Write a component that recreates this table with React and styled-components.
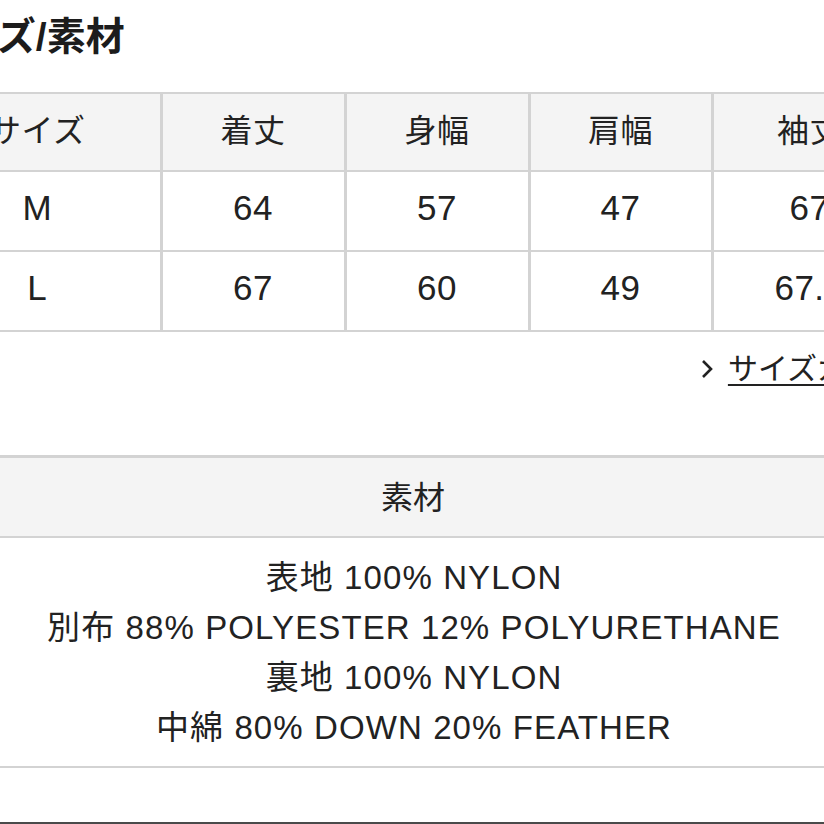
import React from 'react';
import styled, { createGlobalStyle } from 'styled-components';

const rule = '#d3d3d3';
const ink = '#222';
const headBg = '#f4f4f4';

const GlobalStyle = createGlobalStyle`
  html, body {
    margin: 0;
    padding: 0;
    background: #fff;
    overflow: hidden;
  }
  body {
    font-family: "Liberation Sans", "Noto Sans CJK JP", sans-serif;
    color: ${ink};
  }
`;

/* the view is a crop of a wider page, so the page sits left of the window */
const Page = styled.div`
  width: 992px;
  margin-left: -85px;
  display: flex;
  flex-direction: column;
`;

const Title = styled.h2`
  margin: 0;
  padding: 15px 0 0 5px;
  height: 92px;
  box-sizing: border-box;
  font-size: 39px;
  line-height: 44px;
  font-weight: 700;
  color: #1c1c1c;
`;

const SizeTable = styled.table`
  width: 100%;
  border-collapse: collapse;
  table-layout: fixed;
`;

const Cell = styled.td`
  height: ${({ $head }) => ($head ? '78px' : '80px')};
  padding: 0 0 ${({ $head }) => ($head ? '8px' : '6px')};
  box-sizing: border-box;
  text-align: center;
  vertical-align: middle;
  font-size: ${({ $head }) => ($head ? '32px' : '35px')};
  font-weight: 400;
  letter-spacing: 0.5px;
  border-top: 2px solid ${rule};
  border-bottom: 2px solid ${rule};
  border-left: 3px solid ${rule};
  border-right: 3px solid ${rule};
  background: ${({ $head }) => ($head ? headBg : '#fff')};
  &:first-child {
    border-left: none;
  }
`;

const LinkRow = styled.div`
  display: flex;
  justify-content: flex-end;
  align-items: center;
  gap: 15px;
  padding: 18px 0 0 0;
  height: 56px;
  box-sizing: border-box;
`;

const Chevron = styled.svg`
  width: 12px;
  height: 20px;
  flex-shrink: 0;
`;

const GuideLink = styled.a`
  font-size: 30px;
  line-height: 36px;
  color: ${ink};
  text-decoration: underline;
  text-decoration-thickness: 2px;
  text-underline-offset: 5px;
`;

const Material = styled.section`
  margin-top: 67px;
  border-top: 3px solid ${rule};
  border-bottom: 2px solid ${rule};
`;

const MaterialHead = styled.div`
  height: 80px;
  display: flex;
  align-items: center;
  justify-content: center;
  background: ${headBg};
  border-bottom: 2px solid ${rule};
  font-size: 32px;
  padding: 0 0 4px 4px;
  box-sizing: border-box;
`;

const MaterialBody = styled.div`
  padding: 15px 0 13px 6px;
  display: flex;
  flex-direction: column;
  align-items: center;
`;

const MaterialLine = styled.div`
  font-size: 33px;
  line-height: 50px;
  letter-spacing: 1.1px;
  white-space: nowrap;
`;

const Divider = styled.div`
  margin-top: 54px;
  border-top: 2px solid #4a4a4a;
`;

const columns = ['サイズ', '着丈', '身幅', '肩幅', '袖丈'];
const widths = [246, 184, 184, 183, 195];
const rows = [
  ['M', '64', '57', '47', '67'],
  ['L', '67', '60', '49', '67.5'],
];

const materials = [
  '表地 100% NYLON',
  '別布 88% POLYESTER 12% POLYURETHANE',
  '裏地 100% NYLON',
  '中綿 80% DOWN 20% FEATHER',
];

export default function App() {
  return (
    <>
      <GlobalStyle />
      <Page>
        <Title>サイズ/素材</Title>
        <SizeTable>
          <colgroup>
            {widths.map((w, i) => (
              <col key={i} style={{ width: w }} />
            ))}
          </colgroup>
          <thead>
            <tr>
              {columns.map((c) => (
                <Cell as="th" key={c} $head>
                  {c}
                </Cell>
              ))}
            </tr>
          </thead>
          <tbody>
            {rows.map((r) => (
              <tr key={r[0]}>
                {r.map((v, i) => (
                  <Cell key={i}>{v}</Cell>
                ))}
              </tr>
            ))}
          </tbody>
        </SizeTable>
        <LinkRow>
          <Chevron viewBox="0 0 12 20">
            <polyline points="2,2 10,10 2,18" fill="none" stroke="#222" strokeWidth="2.6" />
          </Chevron>
          <GuideLink href="#">サイズガイド</GuideLink>
        </LinkRow>
        <Material>
          <MaterialHead>素材</MaterialHead>
          <MaterialBody>
            {materials.map((m) => (
              <MaterialLine key={m}>{m}</MaterialLine>
            ))}
          </MaterialBody>
        </Material>
        <Divider />
      </Page>
    </>
  );
}
